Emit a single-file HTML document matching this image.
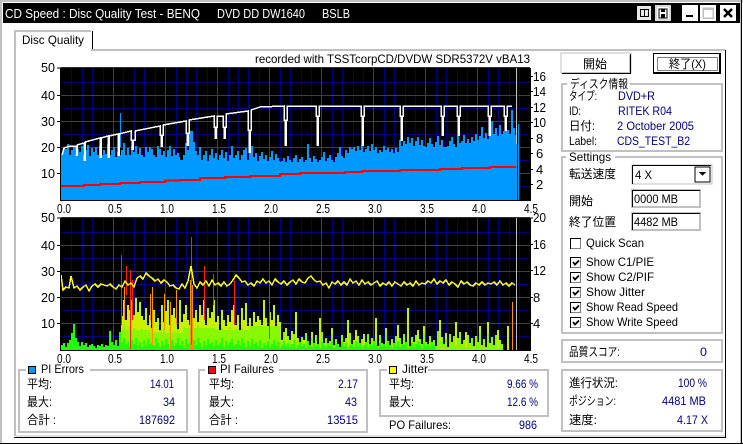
<!DOCTYPE html>
<html><head><meta charset="utf-8"><style>
html,body{margin:0;padding:0;background:#fff;width:743px;height:444px;overflow:hidden}
svg{display:block}
text{font-family:"Liberation Sans","WenQuanYi Zen Hei","Noto Sans CJK JP",sans-serif;font-size:12px;fill:#000}
.n{font-size:13px}
.b{fill:#000080}
.w{fill:#fff;font-size:13px}
.g{fill:none;stroke:#c0c0c0;stroke-width:2}
</style></head><body>
<svg width="743" height="444" viewBox="0 0 743 444" xmlns="http://www.w3.org/2000/svg" shape-rendering="crispEdges">
<rect width="743" height="444" fill="#fff"/>
<path d="M1 0V444M0 1H743" stroke="#c0c0c0" stroke-width="2"/>
<path d="M741.500 0V444M0 443.500H743" stroke="#000"/>
<rect x="3" y="3" width="737" height="20" fill="#000"/>
<path d="M740.500 0V443" stroke="#c0c0c0"/>
<text class="w" x="5" y="18" textLength="195" lengthAdjust="spacingAndGlyphs">CD Speed : Disc Quality Test - BENQ</text>
<text class="w" x="217" y="18" textLength="88" lengthAdjust="spacingAndGlyphs">DVD DD DW1640</text>
<text class="w" x="322" y="18" textLength="28" lengthAdjust="spacingAndGlyphs">BSLB</text>
<!-- title buttons -->
<rect x="637" y="6" width="14" height="14" fill="#e8e8e8"/>
<path d="M640.500 9.500h4v7h-4zM644.500 9.500h4v7h-4z" fill="none" stroke="#000"/>
<rect x="655" y="5" width="16" height="16" fill="#d8d8d8"/><rect x="657" y="7" width="12" height="12" fill="#fff"/>
<rect x="659" y="9" width="8" height="9" fill="none" stroke="#000"/><rect x="661" y="9" width="4" height="3" fill="#000"/><rect x="661" y="14" width="4" height="4" fill="#000"/>
<rect x="682" y="5" width="16" height="16" fill="#fff"/><rect x="686" y="15" width="7" height="2" fill="#000"/>
<rect x="700" y="5" width="16" height="16" fill="#fff"/><rect x="703" y="8" width="10" height="10" fill="none" stroke="#c0c0c0" stroke-width="1.500"/><rect x="703" y="8" width="10" height="2" fill="#c0c0c0"/>
<rect x="720" y="5" width="16" height="16" fill="#fff"/><path d="M724 9l8 8M732 9l-8 8" stroke="#000" stroke-width="2.500" shape-rendering="auto"/>
<!-- tab -->
<path d="M15 50V31H91" fill="none" stroke="#c0c0c0" stroke-width="2"/>
<path d="M92.500 31V50" stroke="#000"/>
<path d="M91 50H725.500" stroke="#c0c0c0" stroke-width="2"/>
<path d="M15 50V436" stroke="#c0c0c0" stroke-width="2"/>
<path d="M16 436H725" stroke="#c0c0c0" stroke-width="1"/>
<path d="M14 437.500H726M725.500 50V438" stroke="#000"/>
<text x="22" y="44" textLength="62" lengthAdjust="spacingAndGlyphs">Disc Quality</text>
<text x="255" y="63" textLength="275" lengthAdjust="spacingAndGlyphs">recorded with TSSTcorpCD/DVDW SDR5372V vBA13</text>

<!-- chart 1 -->
<g id="c1">
<rect x="61" y="68" width="469" height="132" fill="#000"/>
<path d="M71.500 68V200M82.500 68V200M92.500 68V200M103.500 68V200M123.500 68V200M134.500 68V200M144.500 68V200M155.500 68V200M176.500 68V200M186.500 68V200M196.500 68V200M207.500 68V200M228.500 68V200M238.500 68V200M248.500 68V200M259.500 68V200M280.500 68V200M290.500 68V200M301.500 68V200M311.500 68V200M332.500 68V200M342.500 68V200M353.500 68V200M363.500 68V200M384.500 68V200M394.500 68V200M405.500 68V200M415.500 68V200M436.500 68V200M446.500 68V200M457.500 68V200M467.500 68V200M488.500 68V200M498.500 68V200M509.500 68V200M519.500 68V200M61 82.500H530M61 108.500H530M61 134.500H530M61 160.500H530M61 186.500H530" stroke="#000080"/>
<path d="M113.500 68V200M165.500 68V200M217.500 68V200M269.500 68V200M321.500 68V200M373.500 68V200M425.500 68V200M477.500 68V200M61 95.500H530M61 121.500H530M61 147.500H530M61 173.500H530" stroke="#404040"/>
<path d="M61 67.500H530" stroke="#303030"/>
<path d="M61 200V157H180V161H280V162H345V153H400V147H460V143H480V140H516V200z" fill="#0099ff"/>
<path d="M61 200V155h2V147h2V149h2V144h2V155h2V150h2V147h2V155h2V149h2V152h2V146h2V155h2V150h2V145h2V156h2V148h2V152h2V147h2V155h2V146h2V155h2V150h2V154h2V144h2V155h2V150h2V147h2V158h2V152h2V155h2V150h2V143h2V155h2V148h2V155h2V146h2V152h2V146h2V154h2V148h2V155h2V157h2V147h2V152h2V147h2V149h2V155h2V157h2V146h2V149h2V155h2V151h2V157h2V150h2V146h2V156h2V149h2V155h2V153h2V160h2V160h2V155h2V143h2V150h2V131h2V131h2V142h2V151h2V155h2V147h2V160h2V155h2V151h2V162h2V155h2V149h2V158h2V153h2V160h2V155h2V150h2V158h2V152h2V164h2V155h2V146h2V158h2V155h2V151h2V160h2V155h2V150h2V148h2V160h2V151h2V146h2V157h2V153h2V161h2V156h2V152h2V159h2V155h2V163h2V157h2V151h2V160h2V154h2V158h2V162h2V161h2V158h2V163h2V156h2V160h2V164h2V158h2V155h2V162h2V159h2V157h2V163h2V160h2V144h2V158h2V162h2V156h2V159h2V164h2V160h2V157h2V152h2V161h2V158h2V155h2V160h2V163h2V157h2V153h2V147h2V156h2V158h2V150h2V153h2V147h2V149h2V147h2V151h2V146h2V150h2V145h2V152h2V149h2V146h2V151h2V144h2V150h2V147h2V153h2V150h2V152h2V146h2V150h2V148h2V152h2V149h2V153h2V148h2V152h2V140h2V146h2V141h2V144h2V137h2V143h2V138h2V146h2V141h2V137h2V145h2V140h2V146h2V151h2V143h2V138h2V144h2V147h2V142h2V136h2V145h2V140h2V148h2V155h2V146h2V141h2V137h2V144h2V149h2V136h2V143h2V141h2V135h2V143h2V139h2V147h2V137h2V141h2V134h2V140h2V136h2V127h2V138h2V133h2V139h2V134h2V121h2V134h2V128h2V136h2V125h2V134h2V131h2V123h2V130h2V134h2V110h2V128h2V135h2V124h2V200z" fill="#0099ff"/>
<rect x="120" y="113" width="1" height="34" fill="#0099ff"/>
<path d="M516.500 68V144" stroke="#c0c0c0"/>
<path d="M517.500 68V200" stroke="#000080"/>
<path d="M61 186H84V185H100V184H120V183H140V182H165V180.500H180V180H200V178H225V177H250V176H280V174H300V173H345V172H362V171H400V170H440V169H462V168H490V167H515V166" fill="none" stroke="#ff0000" stroke-width="2"/>
<path d="M62 155L64 148L70 146H76V155H77V145L84 143V160H85V142L100 138V157H101V138L108 136V157H109V136L118 134V155H119V134L131 131V140H132V149H133V140H135V131L160 126V135H161V146H162V135H163V125L186 121V133H187V145H188V133H189V120L214 116V127H215V138H216V127H217V116H223V127H224V138H225V127H226V114L248 111V130H249V152H250V130H251V110L260 107L284 106V120H285V145H286V120H287V106H316V116H317V145H318V116H319V106H361V116H362V145H363V116H364V106H400V116H401V140H402V116H403V106H441V116H442V135H443V116H444V106H457V116H458V135H459V116H460V106H488V116H489V135H490V116H491V106H504V116H505V130H506V116H507V106H512" fill="none" stroke="#fff" stroke-width="1.500"/>
<path d="M60.500 68V200M57 68H61M57 95.500H61M57 121.500H61M57 147.500H61M57 173.500H61M60 200.500H531M530.500 68V200M530 76.500H533M530 91.500H533M530 107.500H533M530 122.500H533M530 138.500H533M530 153.500H533M530 169.500H533M530 184.500H533" stroke="#000"/>
</g>
<g class="n">
<text class="n" x="41" y="72" textLength="14" lengthAdjust="spacingAndGlyphs">50</text>
<text class="n" x="41" y="100" textLength="14" lengthAdjust="spacingAndGlyphs">40</text>
<text class="n" x="41" y="126" textLength="14" lengthAdjust="spacingAndGlyphs">30</text>
<text class="n" x="41" y="152" textLength="14" lengthAdjust="spacingAndGlyphs">20</text>
<text class="n" x="41" y="178" textLength="14" lengthAdjust="spacingAndGlyphs">10</text>
<text class="n" x="533" y="81" textLength="13" lengthAdjust="spacingAndGlyphs">16</text>
<text class="n" x="533" y="96" textLength="13" lengthAdjust="spacingAndGlyphs">14</text>
<text class="n" x="533" y="112" textLength="13" lengthAdjust="spacingAndGlyphs">12</text>
<text class="n" x="533" y="127" textLength="13" lengthAdjust="spacingAndGlyphs">10</text>
<text class="n" x="536" y="143">8</text>
<text class="n" x="536" y="158">6</text>
<text class="n" x="536" y="174">4</text>
<text class="n" x="536" y="189">2</text>
<text class="n" x="57" y="213" textLength="14" lengthAdjust="spacingAndGlyphs">0.0</text>
<text class="n" x="108" y="213" textLength="14" lengthAdjust="spacingAndGlyphs">0.5</text>
<text class="n" x="160" y="213" textLength="14" lengthAdjust="spacingAndGlyphs">1.0</text>
<text class="n" x="212" y="213" textLength="14" lengthAdjust="spacingAndGlyphs">1.5</text>
<text class="n" x="264" y="213" textLength="14" lengthAdjust="spacingAndGlyphs">2.0</text>
<text class="n" x="316" y="213" textLength="14" lengthAdjust="spacingAndGlyphs">2.5</text>
<text class="n" x="368" y="213" textLength="14" lengthAdjust="spacingAndGlyphs">3.0</text>
<text class="n" x="420" y="213" textLength="14" lengthAdjust="spacingAndGlyphs">3.5</text>
<text class="n" x="472" y="213" textLength="14" lengthAdjust="spacingAndGlyphs">4.0</text>
<text class="n" x="524" y="213" textLength="14" lengthAdjust="spacingAndGlyphs">4.5</text>
</g>

<!-- chart 2 -->
<rect x="61" y="218" width="469" height="132" fill="#000"/>
<path d="M71.500 218V350M82.500 218V350M92.500 218V350M103.500 218V350M123.500 218V350M134.500 218V350M144.500 218V350M155.500 218V350M176.500 218V350M186.500 218V350M196.500 218V350M207.500 218V350M228.500 218V350M238.500 218V350M248.500 218V350M259.500 218V350M280.500 218V350M290.500 218V350M301.500 218V350M311.500 218V350M332.500 218V350M342.500 218V350M353.500 218V350M363.500 218V350M384.500 218V350M394.500 218V350M405.500 218V350M415.500 218V350M436.500 218V350M446.500 218V350M457.500 218V350M467.500 218V350M488.500 218V350M498.500 218V350M509.500 218V350M519.500 218V350M61 232.500H530M61 258.500H530M61 284.500H530M61 310.500H530M61 336.500H530" stroke="#000080"/>
<path d="M113.500 218V350M165.500 218V350M217.500 218V350M269.500 218V350M321.500 218V350M373.500 218V350M425.500 218V350M477.500 218V350M61 245.500H530M61 271.500H530M61 297.500H530M61 323.500H530" stroke="#404040"/>
<path d="M61 217.500H530" stroke="#303030"/>
<!-- yellow-lime -->
<path d="M121 350V316h2V300h2V320h2V305h2V310h2V300h2V315h2V298h2V312h2V302h2V316h2V320h2V308h2V325h2V315h2V328h2V310h2V322h2V318h2V330h2V305h2V322h2V311h2V300h2V325h2V315h2V308h2V318h2V330h2V300h2V322h2V314h2V305h2V320h2V325h2V290h2V318h2V310h2V322h2V305h2V315h2V300h2V325h2V308h2V318h2V312h2V300h2V322h2V316h2V330h2V310h2V320h2V326h2V315h2V322h2V310h2V305h2V325h2V315h2V330h2V308h2V320h2V303h2V326h2V318h2V330h2V312h2V322h2V316h2V320h2V325h2V300h2V318h2V326h2V312h2V320h2V305h2V330h2V315h2V322h2V340h2V350h2V328h2V350h4V331h2V350h2V312h2V350h6V340h2V350h6V332h2V350h6V318h2V350h10V328h2V350h14V320h2V350h6V330h2V350h6V334h2V350h10V318h2V350h8V328h2V350h10V325h2V350h8V308h2V350h8V330h2V350h4V326h2V350h14V320h2V350h4V333h2V350h8V322h2V350h8V332h2V350h12V326h2V350h6V322h2V350h8V330h2V350h8V326h2V350h8z" fill="#c8f000"/>
<!-- lime underlay -->
<path d="M121 350V330H150V333H185V328H215V330H250V326H280V350z" fill="#88f800"/>
<!-- lime -->
<path d="M121 350V333h2V325h2V338h2V330h2V327h2V335h2V328h2V340h2V332h2V336h2V329h2V337h2V330h2V340h2V334h2V328h2V338h2V332h2V341h2V330h2V336h2V328h2V339h2V333h2V327h2V337h2V331h2V340h2V329h2V335h2V338h2V327h2V333h2V340h2V330h2V336h2V328h2V338h2V325h2V334h2V340h2V330h2V336h2V328h2V339h2V331h2V337h2V329h2V341h2V333h2V328h2V336h2V330h2V339h2V327h2V335h2V340h2V329h2V334h2V338h2V328h2V336h2V341h2V330h2V337h2V327h2V339h2V332h2V336h2V329h2V341h2V333h2V327h2V338h2V331h2V326h2V340h2V335h2V328h2V337h2V342h2V332h2V344h2V336h2V340h2V345h2V334h2V342h2V338h2V346h2V337h2V343h2V333h2V341h2V347h2V337h2V344h2V335h2V346h2V340h2V332h2V343h2V338h2V347h2V341h2V334h2V345h2V339h2V344h2V348h2V335h2V342h2V338h2V346h2V333h2V344h2V340h2V348h2V336h2V343h2V339h2V346h2V342h2V334h2V347h2V338h2V344h2V340h2V346h2V335h2V343h2V347h2V332h2V341h2V345h2V339h2V348h2V336h2V343h2V338h2V346h2V334h2V344h2V340h2V347h2V337h2V342h2V335h2V346h2V339h2V344h2V333h2V342h2V348h2V336h2V343h2V340h2V346h2V331h2V341h2V337h2V344h2V339h2V347h2V334h2V342h2V336h2V345h2V338h2V332h2V344h2V340h2V347h2V335h2V343h2V338h2V346h2V336h2V342h2V333h2V345h2V339h2V347h2V334h2V343h2V337h2V345h2V335h2V348h2V340h2V344h2V350z" fill="#88f800"/>
<!-- green -->
<path d="M61 350V345h2V343h2V347h2V343h2V340h2V333h2V324h2V338h2V342h2V346h2V342h2V345h2V343h2V347h2V345h2V344h2V346h2V348h2V345h2V346h2V344h2V347h2V345h2V346h2V331h2V342h2V345h2V340h2V346h2V332h2V342h2V338h2V344h2V341h2V346h2V340h2V344h2V338h2V345h2V342h2V347h2V340h2V345h2V339h2V344h2V342h2V346h2V338h2V343h2V347h2V341h2V345h2V339h2V344h2V348h2V340h2V346h2V343h2V338h2V345h2V341h2V347h2V339h2V344h2V342h2V346h2V340h2V345h2V338h2V343h2V347h2V341h2V345h2V339h2V344h2V342h2V346h2V340h2V345h2V343h2V338h2V347h2V341h2V345h2V342h2V339h2V346h2V344h2V340h2V345h2V338h2V343h2V347h2V341h2V346h2V339h2V344h2V342h2V346h2V340h2V348h2V343h2V345h2V341h2V347h2V344h2V340h2V346h2V342h2V348h2V345h2V341h2V346h2V343h2V347h2V344h2V340h2V348h2V345h2V342h2V346h2V344h2V348h2V341h2V345h2V347h2V343h2V346h2V344h2V348h2V342h2V345h2V347h2V343h2V346h2V341h2V348h2V344h2V345h2V347h2V342h2V346h2V343h2V348h2V345h2V344h2V347h2V341h2V346h2V343h2V348h2V345h2V342h2V347h2V344h2V346h2V341h2V345h2V348h2V343h2V346h2V344h2V347h2V342h2V345h2V348h2V343h2V346h2V341h2V347h2V344h2V345h2V342h2V348h2V346h2V343h2V347h2V344h2V341h2V345h2V348h2V343h2V346h2V344h2V347h2V342h2V345h2V350z" fill="#22ff00"/>
<!-- red/orange spikes -->
<path d="M121.500 255V325M126.500 266V295M130.500 270V349M132.500 280V320M191.500 237V345M204.500 266V320M213.500 274V305M234.500 281V325M269.500 281V339" stroke="#ff2000"/>
<path d="M124.500 287V320M150.500 294V320M152.500 287V345M164.500 294V330M170.500 302V350M176.500 290V325M190.500 280V350M192.500 285V350M512.500 302V350" stroke="#ff9000"/>
<path d="M516.500 218V350" stroke="#c0c0c0"/>
<path d="M61 275L63 290L66 287L69 288L71 276L74 288L77 286L80 290L83 287L86 285L89 291L92 286L95 284L98 287L101 284L104 285L107 286L110 284L113 287L116 289L119 285L122 287L125 281L128 285L131 283L134 287L137 278L140 276L143 279L146 273L149 276L152 278L155 281L158 279L161 283L164 280L167 282L170 286L173 285L176 288L179 289L182 284L185 288L188 281L191 266L194 284L197 288L200 282L203 285L206 281L209 286L212 280L215 285L218 283L221 286L224 282L227 286L230 284L233 280L236 275L239 278L242 282L245 281L248 285L251 283L254 286L257 281L260 283L263 279L266 283L269 281L272 285L275 279L278 282L281 284L284 281L287 285L290 282L293 280L296 284L299 279L302 282L305 283L308 278L311 276L314 280L317 282L320 281L323 285L326 283L329 288L332 282L335 284L338 281L341 285L344 282L347 285L350 279L353 283L356 281L359 285L362 280L365 284L368 282L371 285L374 283L377 281L380 286L383 283L386 285L389 282L392 286L395 282L398 284L401 286L404 282L407 285L410 283L413 286L416 281L419 285L422 283L425 284L428 281L431 283L434 279L437 284L440 281L443 283L446 280L449 285L452 282L455 284L458 287L461 281L464 284L467 282L470 285L473 286L476 283L479 285L482 282L485 285L488 283L491 284L494 282L497 285L500 281L503 285L506 283L509 286L512 283L515 285" fill="none" stroke="#ffff00" stroke-width="1.500"/>
<path d="M60.500 218V350M57 218H61M57 245.500H61M57 271.500H61M57 297.500H61M57 323.500H61M60 350.500H531M530.500 218V350M530 218H533M530 244.500H533M530 270.500H533M530 297.500H533M530 323.500H533" stroke="#000"/>
<text class="n" x="41" y="222" textLength="14" lengthAdjust="spacingAndGlyphs">50</text>
<text class="n" x="41" y="250" textLength="14" lengthAdjust="spacingAndGlyphs">40</text>
<text class="n" x="41" y="276" textLength="14" lengthAdjust="spacingAndGlyphs">30</text>
<text class="n" x="41" y="302" textLength="14" lengthAdjust="spacingAndGlyphs">20</text>
<text class="n" x="41" y="328" textLength="14" lengthAdjust="spacingAndGlyphs">10</text>
<text class="n" x="533" y="222" textLength="13" lengthAdjust="spacingAndGlyphs">20</text>
<text class="n" x="533" y="249" textLength="13" lengthAdjust="spacingAndGlyphs">16</text>
<text class="n" x="533" y="275" textLength="13" lengthAdjust="spacingAndGlyphs">12</text>
<text class="n" x="533" y="302">8</text>
<text class="n" x="533" y="328">4</text>
<text class="n" x="57" y="363" textLength="14" lengthAdjust="spacingAndGlyphs">0.0</text>
<text class="n" x="108" y="363" textLength="14" lengthAdjust="spacingAndGlyphs">0.5</text>
<text class="n" x="160" y="363" textLength="14" lengthAdjust="spacingAndGlyphs">1.0</text>
<text class="n" x="212" y="363" textLength="14" lengthAdjust="spacingAndGlyphs">1.5</text>
<text class="n" x="264" y="363" textLength="14" lengthAdjust="spacingAndGlyphs">2.0</text>
<text class="n" x="316" y="363" textLength="14" lengthAdjust="spacingAndGlyphs">2.5</text>
<text class="n" x="368" y="363" textLength="14" lengthAdjust="spacingAndGlyphs">3.0</text>
<text class="n" x="420" y="363" textLength="14" lengthAdjust="spacingAndGlyphs">3.5</text>
<text class="n" x="472" y="363" textLength="14" lengthAdjust="spacingAndGlyphs">4.0</text>
<text class="n" x="524" y="363" textLength="14" lengthAdjust="spacingAndGlyphs">4.5</text>

<!-- bottom groups -->
<rect class="g" x="19" y="370" width="168" height="62"/>
<rect x="26" y="364" width="64" height="10" fill="#fff"/>
<rect x="28.500" y="366.500" width="7" height="7" fill="#0099ff" stroke="#000"/>
<text x="41" y="373" textLength="43" lengthAdjust="spacingAndGlyphs">PI Errors</text>
<text x="27" y="388" textLength="25" lengthAdjust="spacingAndGlyphs">平均:</text>
<text x="27" y="406" textLength="25" lengthAdjust="spacingAndGlyphs">最大:</text>
<text x="27" y="424" textLength="29" lengthAdjust="spacingAndGlyphs">合計 :</text>
<text class="b" x="150" y="388" textLength="24" lengthAdjust="spacingAndGlyphs">14.01</text>
<text class="b" x="163" y="406" textLength="12" lengthAdjust="spacingAndGlyphs">34</text>
<text class="b" x="139" y="424" textLength="36" lengthAdjust="spacingAndGlyphs">187692</text>

<rect class="g" x="199" y="370" width="168" height="62"/>
<rect x="205" y="364" width="74" height="10" fill="#fff"/>
<rect x="208.500" y="366.500" width="7" height="7" fill="#ff0000" stroke="#000"/>
<text x="220" y="373" textLength="54" lengthAdjust="spacingAndGlyphs">PI Failures</text>
<text x="209" y="388" textLength="25" lengthAdjust="spacingAndGlyphs">平均:</text>
<text x="209" y="406" textLength="25" lengthAdjust="spacingAndGlyphs">最大:</text>
<text x="209" y="424" textLength="29" lengthAdjust="spacingAndGlyphs">合計 :</text>
<text class="b" x="338" y="388" textLength="20" lengthAdjust="spacingAndGlyphs">2.17</text>
<text class="b" x="345" y="406" textLength="12" lengthAdjust="spacingAndGlyphs">43</text>
<text class="b" x="327" y="424" textLength="31" lengthAdjust="spacingAndGlyphs">13515</text>

<rect class="g" x="380" y="370" width="168" height="46"/>
<rect x="387" y="364" width="41" height="10" fill="#fff"/>
<rect x="389.500" y="366.500" width="7" height="7" fill="#ffff00" stroke="#000"/>
<text x="402" y="373" textLength="26" lengthAdjust="spacingAndGlyphs">Jitter</text>
<text x="389" y="388" textLength="25" lengthAdjust="spacingAndGlyphs">平均:</text>
<text x="389" y="406" textLength="25" lengthAdjust="spacingAndGlyphs">最大:</text>
<text class="b" x="507" y="388" textLength="31" lengthAdjust="spacingAndGlyphs">9.66 %</text>
<text class="b" x="507" y="406" textLength="31" lengthAdjust="spacingAndGlyphs">12.6 %</text>
<text x="389" y="429" textLength="62" lengthAdjust="spacingAndGlyphs">PO Failures:</text>
<text class="b" x="519" y="429" textLength="18" lengthAdjust="spacingAndGlyphs">986</text>

<!-- right: buttons -->
<rect x="561" y="53" width="70" height="20" fill="#fff" stroke="#c0c0c0" stroke-width="1"/>
<path d="M630.500 54V73.500H562" fill="none" stroke="#000" stroke-width="1"/>
<path d="M629.500 55V72.500H563" fill="none" stroke="#c0c0c0"/>
<text x="583" y="68" textLength="24" lengthAdjust="spacingAndGlyphs">開始</text>
<rect x="653.500" y="53.500" width="67" height="20" fill="#fff" stroke="#000"/>
<path d="M719.500 54V73M654 72.500H720" stroke="#000"/>
<rect x="657.500" y="57.500" width="60" height="13" fill="none" stroke="#000" stroke-dasharray="1 1"/>
<text x="669" y="68" textLength="37" lengthAdjust="spacingAndGlyphs">終了(X)</text>

<!-- disc info -->
<rect class="g" x="562" y="84" width="160" height="67"/>
<rect x="567" y="78" width="63" height="10" fill="#fff"/>
<text x="570" y="88" textLength="58" lengthAdjust="spacingAndGlyphs">ディスク情報</text>
<text x="569" y="100" textLength="28" lengthAdjust="spacingAndGlyphs">タイプ:</text>
<text x="569" y="115" textLength="12" lengthAdjust="spacingAndGlyphs">ID:</text>
<text x="569" y="130" textLength="26" lengthAdjust="spacingAndGlyphs">日付:</text>
<text x="569" y="145" textLength="28" lengthAdjust="spacingAndGlyphs">Label:</text>
<text class="b" x="618" y="100" textLength="37" lengthAdjust="spacingAndGlyphs">DVD+R</text>
<text class="b" x="618" y="115" textLength="54" lengthAdjust="spacingAndGlyphs">RITEK R04</text>
<text class="b" x="617" y="130" textLength="77" lengthAdjust="spacingAndGlyphs">2 October 2005</text>
<text class="b" x="617" y="145" textLength="73" lengthAdjust="spacingAndGlyphs">CDS_TEST_B2</text>

<!-- settings -->
<rect class="g" x="562" y="157" width="160" height="176"/>
<rect x="566" y="152" width="49" height="10" fill="#fff"/>
<text x="569" y="161" textLength="42" lengthAdjust="spacingAndGlyphs">Settings</text>
<text x="569" y="178" textLength="47" lengthAdjust="spacingAndGlyphs">転送速度</text>
<rect x="632" y="165" width="80" height="19" fill="#fff" stroke="#c0c0c0" stroke-width="1"/>
<path d="M632.500 184V165.500H711" fill="none" stroke="#000"/>
<rect x="695" y="167" width="15" height="15" fill="#fff" stroke="#000" stroke-width="1"/>
<path d="M699 172h7l-3.500 4z" fill="#000"/>
<text x="635" y="179" textLength="17" lengthAdjust="spacingAndGlyphs">4 X</text>
<text x="569" y="205" textLength="24" lengthAdjust="spacingAndGlyphs">開始</text>
<rect x="632" y="190" width="68" height="17" fill="#fff" stroke="#c0c0c0" stroke-width="2"/>
<path d="M632.500 207V190.500H700" fill="none" stroke="#000"/>
<text x="634" y="203" textLength="44" lengthAdjust="spacingAndGlyphs">0000 MB</text>
<text x="569" y="226" textLength="47" lengthAdjust="spacingAndGlyphs">終了位置</text>
<rect x="632" y="213" width="68" height="17" fill="#fff" stroke="#c0c0c0" stroke-width="2"/>
<path d="M632.500 230V213.500H700" fill="none" stroke="#000"/>
<text x="634" y="226" textLength="44" lengthAdjust="spacingAndGlyphs">4482 MB</text>

<rect x="570.500" y="238.500" width="10" height="10" fill="#fff" stroke="#808080"/>
<path d="M570.500 249V238.500H581" fill="none" stroke="#000"/>
<text x="586" y="247" textLength="58" lengthAdjust="spacingAndGlyphs">Quick Scan</text>
<g fill="#fff" stroke="#808080">
<rect x="570.500" y="257.500" width="10" height="10"/><rect x="570.500" y="272.500" width="10" height="10"/><rect x="570.500" y="287.500" width="10" height="10"/><rect x="570.500" y="302.500" width="10" height="10"/><rect x="570.500" y="317.500" width="10" height="10"/>
</g>
<path d="M570.500 268V257.500H581M570.500 283V272.500H581M570.500 298V287.500H581M570.500 313V302.500H581M570.500 328V317.500H581" fill="none" stroke="#000"/>
<path d="M573 262l2 2.500 4-4M573 277l2 2.500 4-4M573 292l2 2.500 4-4M573 307l2 2.500 4-4M573 322l2 2.500 4-4" fill="none" stroke="#000" stroke-width="1.800" shape-rendering="auto"/>
<text x="586" y="266" textLength="68" lengthAdjust="spacingAndGlyphs">Show C1/PIE</text>
<text x="586" y="281" textLength="68" lengthAdjust="spacingAndGlyphs">Show C2/PIF</text>
<text x="586" y="296" textLength="59" lengthAdjust="spacingAndGlyphs">Show Jitter</text>
<text x="586" y="311" textLength="92" lengthAdjust="spacingAndGlyphs">Show Read Speed</text>
<text x="586" y="326" textLength="92" lengthAdjust="spacingAndGlyphs">Show Write Speed</text>

<!-- score -->
<rect class="g" x="562" y="340" width="160" height="22"/>
<text x="569" y="356" textLength="51" lengthAdjust="spacingAndGlyphs">品質スコア:</text>
<text class="b" x="700" y="356" textLength="7" lengthAdjust="spacingAndGlyphs">0</text>

<!-- progress -->
<rect class="g" x="562" y="370" width="160" height="61"/>
<text x="569" y="387" textLength="49" lengthAdjust="spacingAndGlyphs">進行状況:</text>
<text x="569" y="405" textLength="47" lengthAdjust="spacingAndGlyphs">ポジション:</text>
<text x="569" y="424" textLength="28" lengthAdjust="spacingAndGlyphs">速度:</text>
<text class="b" x="678" y="387" textLength="29" lengthAdjust="spacingAndGlyphs">100 %</text>
<text class="b" x="662" y="405" textLength="44" lengthAdjust="spacingAndGlyphs">4481 MB</text>
<text class="b" x="677" y="424" textLength="31" lengthAdjust="spacingAndGlyphs">4.17 X</text>
</svg>
</body></html>
